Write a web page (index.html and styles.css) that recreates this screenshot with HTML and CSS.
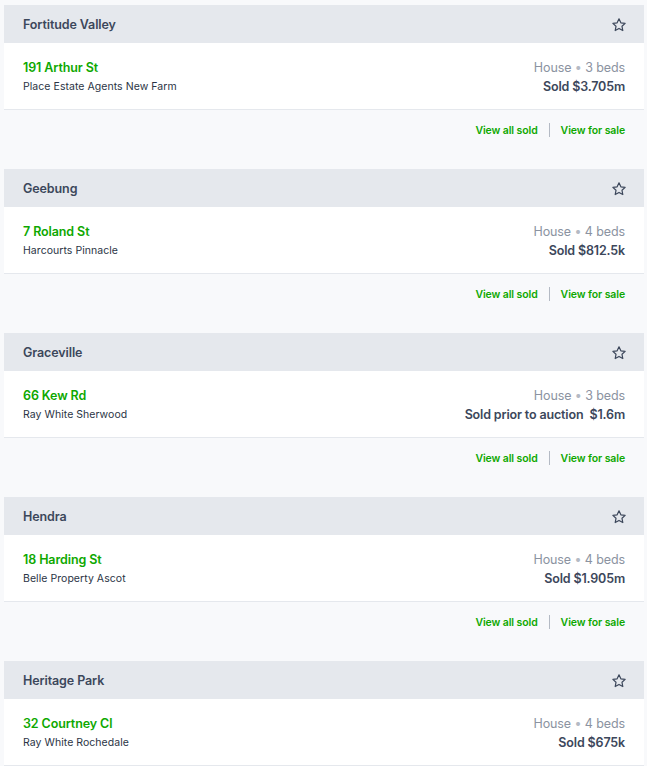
FILE: index.html
```html
<!DOCTYPE html>
<html>
<head>
<meta charset="utf-8">
<link rel="stylesheet" href="styles.css">
</head>
<body>
<div class="list">
  <section class="card">
    <div class="card-head"><span class="suburb">Fortitude Valley</span><svg class="star" viewBox="0 0 24 24"><path d="M12 2.8l2.8 5.9 6.4.8-4.7 4.4 1.2 6.4L12 17.2l-5.7 3.1 1.2-6.4-4.7-4.4 6.4-.8z"/></svg></div>
    <div class="card-body">
      <div class="left"><div class="street">191 Arthur St</div><div class="agent">Place Estate Agents New Farm</div></div>
      <div class="right"><div class="type">House <span class="dot">•</span> 3 beds</div><div class="price">Sold $3.705m</div></div>
    </div>
    <div class="card-foot"><a class="link">View all sold</a><span class="sep"></span><a class="link">View for sale</a></div>
  </section>
  <section class="card">
    <div class="card-head"><span class="suburb">Geebung</span><svg class="star" viewBox="0 0 24 24"><path d="M12 2.8l2.8 5.9 6.4.8-4.7 4.4 1.2 6.4L12 17.2l-5.7 3.1 1.2-6.4-4.7-4.4 6.4-.8z"/></svg></div>
    <div class="card-body">
      <div class="left"><div class="street">7 Roland St</div><div class="agent">Harcourts Pinnacle</div></div>
      <div class="right"><div class="type">House <span class="dot">•</span> 4 beds</div><div class="price">Sold $812.5k</div></div>
    </div>
    <div class="card-foot"><a class="link">View all sold</a><span class="sep"></span><a class="link">View for sale</a></div>
  </section>
  <section class="card">
    <div class="card-head"><span class="suburb">Graceville</span><svg class="star" viewBox="0 0 24 24"><path d="M12 2.8l2.8 5.9 6.4.8-4.7 4.4 1.2 6.4L12 17.2l-5.7 3.1 1.2-6.4-4.7-4.4 6.4-.8z"/></svg></div>
    <div class="card-body">
      <div class="left"><div class="street">66 Kew Rd</div><div class="agent">Ray White Sherwood</div></div>
      <div class="right"><div class="type">House <span class="dot">•</span> 3 beds</div><div class="price">Sold prior to auction<span class="gap"></span>$1.6m</div></div>
    </div>
    <div class="card-foot"><a class="link">View all sold</a><span class="sep"></span><a class="link">View for sale</a></div>
  </section>
  <section class="card">
    <div class="card-head"><span class="suburb">Hendra</span><svg class="star" viewBox="0 0 24 24"><path d="M12 2.8l2.8 5.9 6.4.8-4.7 4.4 1.2 6.4L12 17.2l-5.7 3.1 1.2-6.4-4.7-4.4 6.4-.8z"/></svg></div>
    <div class="card-body">
      <div class="left"><div class="street">18 Harding St</div><div class="agent">Belle Property Ascot</div></div>
      <div class="right"><div class="type">House <span class="dot">•</span> 4 beds</div><div class="price">Sold $1.905m</div></div>
    </div>
    <div class="card-foot"><a class="link">View all sold</a><span class="sep"></span><a class="link">View for sale</a></div>
  </section>
  <section class="card">
    <div class="card-head"><span class="suburb">Heritage Park</span><svg class="star" viewBox="0 0 24 24"><path d="M12 2.8l2.8 5.9 6.4.8-4.7 4.4 1.2 6.4L12 17.2l-5.7 3.1 1.2-6.4-4.7-4.4 6.4-.8z"/></svg></div>
    <div class="card-body">
      <div class="left"><div class="street">32 Courtney Cl</div><div class="agent">Ray White Rochedale</div></div>
      <div class="right"><div class="type">House <span class="dot">•</span> 4 beds</div><div class="price">Sold $675k</div></div>
    </div>
    <div class="card-foot"><a class="link">View all sold</a><span class="sep"></span><a class="link">View for sale</a></div>
  </section>
</div>
</body>
</html>
```
FILE: styles.css
```css
html, body {
  margin: 0;
  background: #f8f9fb;
}
body {
  padding: 5px 3px 0 4px;
  font-family: Inter, "Noto Sans", "Liberation Sans", sans-serif;
  color: #3c475b;
}
.list {
  display: flex;
  flex-direction: column;
}
.card {
  margin-bottom: 19px;
}
.card-head {
  box-sizing: border-box;
  height: 38px;
  background: #e5e8ed;
  display: flex;
  align-items: center;
  justify-content: space-between;
  padding: 1px 17px 0 19px;
}
.suburb {
  font-size: 12.5px;
  font-weight: 600;
  color: #3c475b;
  letter-spacing: -0.1px;
}
.star {
  width: 16px;
  height: 16px;
  fill: none;
  stroke: #3c475b;
  stroke-width: 1.8;
  stroke-linejoin: round;
}
.card-body {
  box-sizing: border-box;
  background: #fff;
  height: 67px;
  border-bottom: 1px solid #e5e8ed;
  display: flex;
  justify-content: space-between;
  align-items: center;
  padding: 2px 19px 0;
}
.left, .right {
  display: flex;
  flex-direction: column;
  gap: 3px;
}
.right {
  align-items: flex-end;
}
.street {
  font-size: 12.5px;
  font-weight: 600;
  color: #0ea800;
  line-height: 16px;
  letter-spacing: -0.1px;
}
.agent {
  font-size: 10.5px;
  color: #2b3445;
  line-height: 16px;
  letter-spacing: 0.05px;
}
.type {
  font-size: 12.5px;
  color: #8b93a1;
  line-height: 16px;
  letter-spacing: -0.1px;
}
.dot {
  color: #b4bac4;
}
.price {
  font-size: 12.5px;
  font-weight: 600;
  color: #3c475b;
  line-height: 16px;
  letter-spacing: -0.15px;
}
.gap {
  display: inline-block;
  width: 6px;
}
.card-foot {
  height: 40px;
  display: flex;
  justify-content: flex-end;
  align-items: center;
  padding: 0 19px;
}
.link {
  font-size: 10.5px;
  font-weight: 600;
  color: #0ea800;
  letter-spacing: -0.1px;
}
.sep {
  width: 1px;
  height: 14px;
  background: #b4bac4;
  margin: 0 11px;
}
```
